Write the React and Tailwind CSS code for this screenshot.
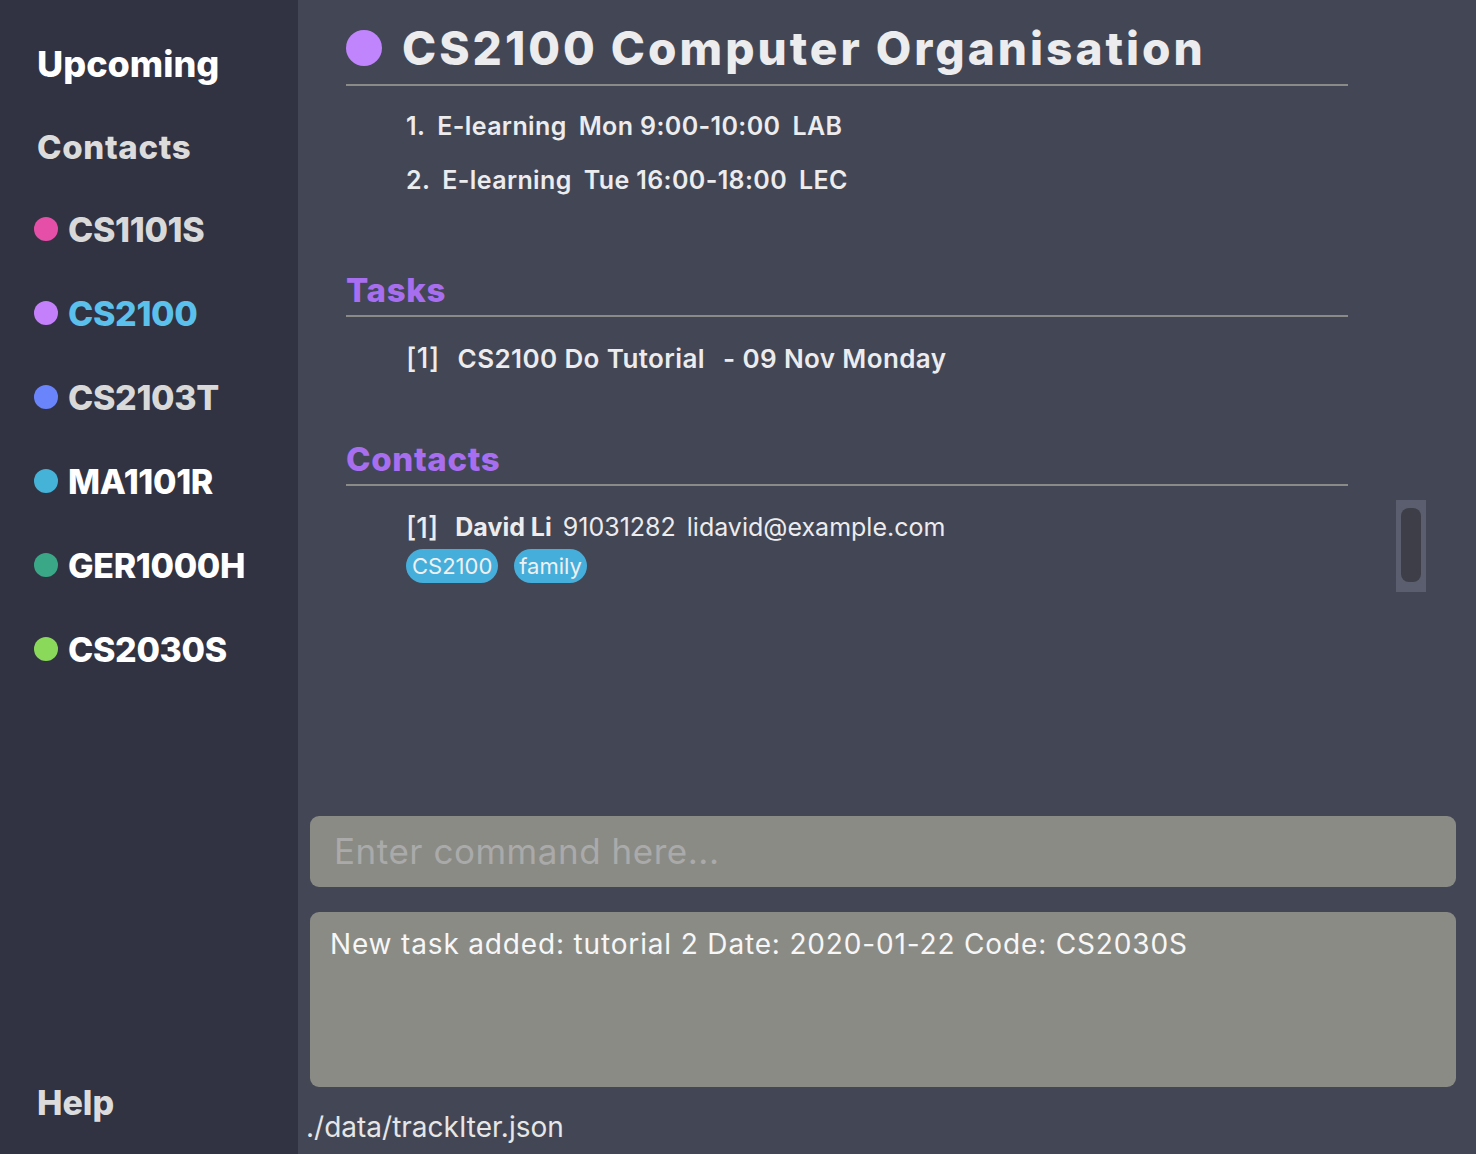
import React from "react";

const modules = [
  { code: "CS1101S", dot: "bg-[#e64fa8]", text: "text-[#d9d9d9]" },
  { code: "CS2100", dot: "bg-[#c47ffb]", text: "text-[#5bc0eb]" },
  { code: "CS2103T", dot: "bg-[#6a84fb]", text: "text-[#d9d9d9]" },
  { code: "MA1101R", dot: "bg-[#45b2d8]", text: "text-white" },
  { code: "GER1000H", dot: "bg-[#3aa886]", text: "text-white" },
  { code: "CS2030S", dot: "bg-[#8ad95a]", text: "text-white" },
];

function Sidebar() {
  return (
    <div className="w-[298px] h-full bg-[#313342] flex flex-col pt-[22px] shrink-0">
      <div className="h-[84px] flex items-center pl-[37px] text-[36px] font-extrabold text-white">
        Upcoming
      </div>
      <div className="h-[84px] flex items-center pl-[37px] text-[33px] font-extrabold text-[#dcdcdc] tracking-[0.02em]">
        Contacts
      </div>
      <div className="-mt-[3px] flex flex-col">
        {modules.map((m) => (
          <div key={m.code} className="h-[84px] flex items-center pl-[34px] gap-[10px]">
            <span className={`w-[24px] h-[24px] rounded-full ${m.dot}`} />
            <span className={`text-[34px] font-extrabold ${m.text} tracking-[-0.01em]`}>{m.code}</span>
          </div>
        ))}
      </div>
      <div className="mt-auto mb-[10px] h-[84px] flex items-center pl-[37px] text-[34px] font-extrabold text-[#dcdcdc]">
        Help
      </div>
    </div>
  );
}

function Heading({ children }) {
  return (
    <div className="h-[50px] flex items-center border-b-2 border-[#8a8a86] text-[33px] font-extrabold text-[#a86ef0] tracking-[0.02em]">
      {children}
    </div>
  );
}

function Main() {
  return (
    <div className="flex-1 h-full bg-[#434654] flex flex-col text-[#ececee]">
      <div className="pl-[48px] flex">
        <div className="w-[1002px] flex flex-col">
          <div className="h-[86px] pt-[12px] flex items-center gap-[20px] border-b-2 border-[#8a8a86]">
            <span className="w-[36px] h-[36px] rounded-full bg-[#c084fc]" />
            <span className="text-[46px] font-extrabold tracking-[0.065em] text-[#ececee]">
              CS2100 Computer Organisation
            </span>
          </div>
          <div className="mt-[14px] pl-[60px] flex flex-col text-[25px] font-semibold tracking-[0.015em]">
            <div className="h-[54px] flex items-center gap-[12px]">
              <span>1.</span>
              <span>E-learning</span>
              <span>Mon 9:00-10:00</span>
              <span>LAB</span>
            </div>
            <div className="h-[54px] flex items-center gap-[12px]">
              <span>2.</span>
              <span>E-learning</span>
              <span>Tue 16:00-18:00</span>
              <span>LEC</span>
            </div>
          </div>
          <div className="mt-[59px]">
            <Heading>Tasks</Heading>
          </div>
          <div className="mt-[14px] pl-[60px] h-[54px] flex items-center text-[26px] font-semibold gap-[18px] tracking-[0.015em]">
            <span className="font-medium text-[28px]">[1]</span>
            <span>CS2100 Do Tutorial</span>
            <span>- 09 Nov Monday</span>
          </div>
          <div className="mt-[51px]">
            <Heading>Contacts</Heading>
          </div>
          <div className="w-[1002px] pl-[60px] mt-[23px] flex flex-col">
            <div className="h-[38px] flex items-center text-[25px] gap-[11px]">
              <span className="font-medium text-[28px]">[1]</span>
              <span className="font-bold ml-[6px]">David Li</span>
              <span className="font-normal">91031282</span>
              <span className="font-normal">lidavid@example.com</span>
            </div>
            <div className="mt-[2px] flex gap-[16px]">
              <span className="h-[34px] px-[6px] rounded-full bg-[#46aedb] text-[22px] text-[#f0f0f0] flex items-center">
                CS2100
              </span>
              <span className="h-[34px] px-[5px] rounded-full bg-[#46aedb] text-[22px] text-[#f0f0f0] flex items-center">
                family
              </span>
            </div>
          </div>
        </div>
        <div className="ml-[48px] mt-[500px] w-[30px] h-[92px] bg-[#5b5e6e] flex justify-center pt-[8px]">
          <div className="w-[20px] h-[74px] rounded-[8px] bg-[#3d3e48]" />
        </div>
      </div>
      <div className="mt-auto flex flex-col pl-[12px] pr-[20px]">
        <div className="h-[71px] rounded-[9px] bg-[#8b8b86] flex items-center pl-[24px] text-[35px] text-[#aaaaaa] tracking-[0.015em]">
          Enter command here...
        </div>
        <div className="mt-[25px] h-[175px] rounded-[9px] bg-[#8b8b86] px-[20px] pt-[12px] text-[28px] text-[#f7f7f7] leading-[40px] tracking-[0.03em]">
          New task added: tutorial 2 Date: 2020-01-22 Code: CS2030S
        </div>
      </div>
      <div className="h-[67px] pt-[22px] pl-[8px] text-[28px] leading-[36px] text-[#e6e6e6]">
        ./data/trackIter.json
      </div>
    </div>
  );
}

export default function App() {
  return (
    <div className="w-[1476px] h-[1154px] flex overflow-hidden font-['Inter','Noto_Sans',sans-serif]">
      <Sidebar />
      <Main />
    </div>
  );
}
